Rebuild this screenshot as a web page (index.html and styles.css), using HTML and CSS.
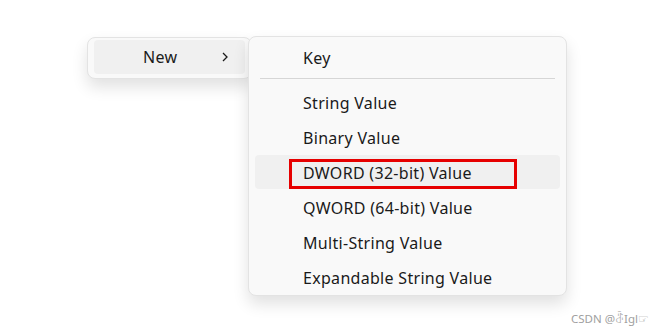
FILE: index.html
```html
<!DOCTYPE html>
<html lang="en">
<head>
    <meta charset="UTF-8">
    <title>Context Menu - New</title>
    <link rel="stylesheet" href="styles.css">
</head>
<body>
    <div class="stage">
        <div class="menus">
            <div class="menu parent-menu">
                <div class="menu-item active">
                    <span>New</span>
                    <svg class="chevron" width="8" height="12" viewBox="0 0 8 12">
                        <path d="M2 2 L6 6 L2 10" fill="none" stroke="#1a1a1a" stroke-width="1.3"/>
                    </svg>
                </div>
            </div>

            <div class="menu sub-menu">
                <div class="menu-item">Key</div>
                <div class="separator"></div>
                <div class="menu-item">String Value</div>
                <div class="menu-item">Binary Value</div>
                <div class="menu-item active marked">
                    <span class="mark">DWORD (32-bit) Value</span>
                </div>
                <div class="menu-item">QWORD (64-bit) Value</div>
                <div class="menu-item">Multi-String Value</div>
                <div class="menu-item">Expandable String Value</div>
            </div>
        </div>

        <div class="watermark">CSDN @ꁔIgl☞</div>
    </div>
</body>
</html>
```

FILE: styles.css
```css
:root {
    --menu-bg: #f9f9f9;
    --menu-border: #e3e3e3;
    --hover: #f0f0f0;
    --text: #1a1a1a;
    --separator: #d6d6d6;
    --mark: #e60000;
}

body {
    margin: 0;
    background: #ffffff;
    font-family: 'Noto Sans', 'Open Sans', sans-serif;
    color: var(--text);
}

.stage {
    width: 657px;
    height: 335px;
    display: flex;
    flex-direction: column;
    justify-content: space-between;
    box-sizing: border-box;
    padding: 36px 8px 9px 87px;
}

.menus {
    display: flex;
    align-items: flex-start;
}

.menu {
    background: var(--menu-bg);
    border: 1px solid var(--menu-border);
    border-radius: 8px;
    box-shadow: 0 8px 16px rgba(0, 0, 0, 0.12);
    box-sizing: border-box;
}

.parent-menu {
    width: 165px;
    margin-top: 1px;
    padding: 2px 6px 4px;
}

.sub-menu {
    width: 319px;
    height: 260px;
    margin-left: -4px;
    padding: 3px 6px;
    position: relative;
    z-index: 1;
}

.menu-item {
    height: 34px;
    margin-bottom: 1px;
    padding-left: 48px;
    display: flex;
    align-items: center;
    font-size: 16px;
    letter-spacing: 0.3px;
    border-radius: 4px;
}

.sub-menu .menu-item {
    padding-top: 1px;
    box-sizing: border-box;
}

.parent-menu .menu-item {
    margin-bottom: 0;
    padding-left: 49px;
    padding-right: 16px;
    justify-content: space-between;
}

.menu-item.active {
    background: var(--hover);
}

.chevron {
    display: block;
}

.separator {
    height: 1px;
    margin: 4px 5px 6px;
    background: var(--separator);
}

.sub-menu .menu-item.marked {
    padding-left: 34px;
    padding-top: 0;
    align-items: flex-end;
}

.mark {
    width: 228px;
    height: 30px;
    box-sizing: border-box;
    border: 3px solid var(--mark);
    padding-left: 11px;
    display: flex;
    align-items: center;
    padding-bottom: 2px;
}

.watermark {
    align-self: flex-end;
    font-size: 11.5px;
    color: #a0a0a0;
}
```
